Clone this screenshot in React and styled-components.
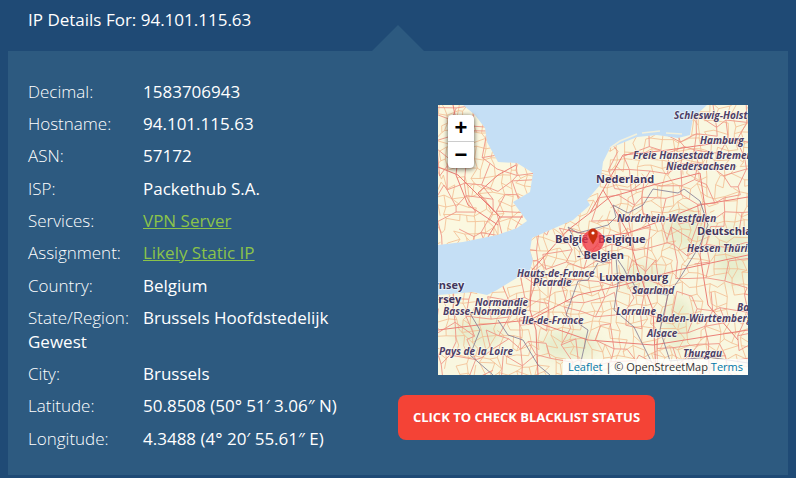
import React from 'react';
import styled, { createGlobalStyle } from 'styled-components';

const GlobalStyle = createGlobalStyle`
  html, body {
    margin: 0;
    padding: 0;
    background: #1f4a75;
    font-family: "Open Sans", "Liberation Sans", sans-serif;
    overflow: hidden;
  }
`;

const Page = styled.div`
  width: 796px;
  height: 478px;
  box-sizing: border-box;
  padding: 0 8px 3px;
  display: flex;
  flex-direction: column;
`;

const Title = styled.h2`
  margin: 0;
  height: 51px;
  box-sizing: border-box;
  padding: 8px 0 0 20px;
  font-size: 17px;
  line-height: 24px;
  font-weight: 400;
  color: #fff;
`;

const Panel = styled.section`
  position: relative;
  flex: 1;
  display: flex;
  background: #2d5a80;
  padding: 28.9px 20px 0;

  &::before {
    content: '';
    position: absolute;
    top: -26px;
    left: 364px;
    border-left: 26px solid transparent;
    border-right: 26px solid transparent;
    border-bottom: 26px solid #2d5a80;
  }
`;

const Details = styled.div`
  width: 320px;
  margin-right: 50px;
  flex: none;
`;

const Row = styled.div`
  font-size: 17px;
  line-height: 24px;
  margin-bottom: 8.29px;
  color: #fff;
`;

const Label = styled.span`
  display: inline-block;
  width: 115px;
  font-weight: 300;
`;

const GreenLink = styled.a`
  color: #8bc34a;
  text-decoration: underline;
`;

const Side = styled.div`
  display: flex;
  flex-direction: column;
  align-items: flex-start;
  padding-top: 25.1px;
`;

const MapFrame = styled.div`
  position: relative;
  width: 310px;
  height: 270px;
  margin-left: 40px;
  overflow: hidden;
  background: #c5dff5;
`;

const MapArt = styled.svg`
  display: block;
`;

const ZoomBox = styled.div`
  position: absolute;
  top: 10px;
  left: 10px;
  width: 26px;
  background: #fff;
  border-radius: 4px;
  box-shadow: 0 1px 5px rgba(0, 0, 0, 0.65);
`;

const ZoomButton = styled.div`
  height: 26px;
  display: flex;
  align-items: center;
  justify-content: center;
  font-family: "Liberation Sans", Arial, sans-serif;
  font-size: 22px;
  font-weight: 700;
  color: #000;
  border-bottom: ${(p) => (p.$last ? 'none' : '1px solid #ccc')};
`;

const Attribution = styled.div`
  position: absolute;
  right: 0;
  bottom: 0;
  height: 16px;
  padding: 0 5px;
  font-size: 11px;
  line-height: 16px;
  color: #333;
  white-space: nowrap;
  background: rgba(255, 255, 255, 0.8);
`;

const AttrLink = styled.a`
  color: #0078a8;
`;

const BlacklistButton = styled.button`
  width: 257px;
  height: 45px;
  margin-top: 20px;
  border: none;
  border-radius: 8px;
  padding: 0;
  background: #f44336;
  color: #fff;
  font-family: "Open Sans", "Liberation Sans", sans-serif;
  font-size: 13px;
  font-weight: 700;
  text-transform: uppercase;
`;

const RegionLabel = styled.text`
  font-family: "Open Sans", "Liberation Sans", sans-serif;
  font-size: 10px;
  font-weight: 700;
  font-style: italic;
  fill: #4d3f66;
  stroke: rgba(255, 255, 255, 0.6);
  stroke-width: 1.5px;
  paint-order: stroke;
`;

const CountryLabel = styled.text`
  font-family: "Open Sans", "Liberation Sans", sans-serif;
  font-size: 11px;
  font-weight: 700;
  fill: #43365c;
  stroke: rgba(255, 255, 255, 0.65);
  stroke-width: 1.5px;
  paint-order: stroke;
`;

const rows = [
  ['Decimal:', '1583706943'],
  ['Hostname:', '94.101.115.63'],
  ['ASN:', '57172'],
  ['ISP:', 'Packethub S.A.'],
  ['Services:', 'VPN Server', true],
  ['Assignment:', 'Likely Static IP', true],
  ['Country:', 'Belgium'],
  ['State/Region:', 'Brussels Hoofdstedelijk Gewest'],
  ['City:', 'Brussels'],
  ['Latitude:', '50.8508 (50° 51′ 3.06″ N)'],
  ['Longitude:', '4.3488 (4° 20′ 55.61″ E)'],
];

const regions = [
  ['Schleswig-Holstein', 236, 14],
  ['Hamburg', 262, 39],
  ['Freie Hansestadt Bremen', 195, 54],
  ['Niedersachsen', 228, 65],
  ['Nordrhein-Westfalen', 179, 117],
  ['Hessen', 249, 147],
  ['Thüringen', 285, 147],
  ['Hauts-de-France', 79, 172],
  ['Picardie', 95, 181],
  ['Saarland', 194, 189],
  ['Normandie', 37, 201],
  ['Basse-Normandie', 5, 210],
  ['Lorraine', 178, 210],
  ['Bayern', 299, 206],
  ['Baden-Württemberg', 218, 217],
  ['Ile-de-France', 84, 219],
  ['Alsace', 209, 232],
  ['Pays de la Loire', 1, 250],
  ['Thurgau', 245, 252],
];

const countries = [
  ['Nederland', 158, 78],
  ['Deutschland', 259, 130],
  ['België', 117, 138],
  ['Belgique', 160, 138],
  ['- Belgien', 139, 154],
  ['Luxembourg', 161, 176],
  ['Guernsey', -26, 184],
  ['Jersey', -10, 198],
];

const englandLand =
  'M25 0L37 10 47 23 49 37 60 57 79 58 95 68 92 87 75 97 89 116 79 123 59 130 25 137 0 140V0Z';
const continentLand =
  'M94 133L119 122 135 115 152 100 149 95 162 80 165 57 172 43 199 32 219 30 240 33 252 30 255 13 269 0H310V270H0V190L25 188 35 187 49 190 59 185 72 177 92 165 95 155 92 145Z';
const wadden = 'M172 43L182 36 199 29M204 28L222 26M228 28L244 29';

const motorways = [
  'M0 62L20 70 45 95 62 112 85 112',
  'M15 0L22 35 18 70 30 100 60 120',
  'M62 112L50 132M62 112L40 88 60 70 78 60',
  'M100 270L98 225 92 205 94 165 130 125 152 108 165 85 185 50 230 45 300 35',
  'M0 225L40 220 92 215 140 190 185 180 240 165 310 150',
  'M130 125L160 132 190 128 225 115 262 100 310 92',
  'M165 85L180 110 190 128 200 165 215 205 218 270',
  'M152 108L172 92 215 80 262 68',
  'M262 68L268 110 262 150 270 200 300 235',
  'M92 215L150 235 215 240 310 225',
];

const borders = [
  'M130 122L140 128 155 124 170 120 178 112 175 100 190 108 205 100 215 84 240 88 246 84 262 96 270 120 262 140',
  'M130 122L145 150 165 158 178 152 180 178 190 170 200 186 230 190 240 176 262 140',
  'M178 152L186 164 192 176',
  'M230 190L222 225 232 256 270 252 310 258',
  'M160 158L150 175 140 176 128 210 150 225 140 270',
  'M60 215L70 230 85 235 100 260 112 270',
  'M30 205L42 225 32 250 55 270',
  'M180 178L176 205 196 222 214 258',
];

// road net: a jittered grid clipped to the land, same look as the osm tiles
function buildRoads(step, seed, keep) {
  let s = seed;
  const rnd = () => {
    s = (s * 16807) % 2147483647;
    return s / 2147483647;
  };
  const nodes = [];
  for (let y = 0; y <= 270 + step; y += step) {
    const line = [];
    for (let x = 0; x <= 310 + step; x += step) {
      line.push([x + (rnd() - 0.5) * step * 0.9, y + (rnd() - 0.5) * step * 0.9]);
    }
    nodes.push(line);
  }
  let d = '';
  nodes.forEach((line, j) => {
    line.forEach((n, i) => {
      const right = line[i + 1];
      const down = nodes[j + 1] && nodes[j + 1][i];
      if (right && rnd() < keep) d += `M${n[0].toFixed(1)} ${n[1].toFixed(1)}L${right[0].toFixed(1)} ${right[1].toFixed(1)}`;
      if (down && rnd() < keep) d += `M${n[0].toFixed(1)} ${n[1].toFixed(1)}L${down[0].toFixed(1)} ${down[1].toFixed(1)}`;
    });
  });
  return d;
}

const mainRoads = buildRoads(16, 4711, 0.72);
const minorRoads = buildRoads(9, 90210, 0.75);

const MapDrawing = () => (
  <MapArt width="310" height="270" viewBox="0 0 310 270">
    <defs>
      <clipPath id="land">
        <path d={englandLand} />
        <path d={continentLand} />
      </clipPath>
      <filter id="soft">
        <feGaussianBlur stdDeviation="6" />
      </filter>
    </defs>
    <rect width="310" height="270" fill="#c5dff5" />
    <path d={englandLand} fill="#fbf8e0" />
    <path d={continentLand} fill="#f9f7e0" />
    <path d={wadden} fill="none" stroke="#f3f1dc" strokeWidth="1.6" />
    <g clipPath="url(#land)">
      <g fill="#d3e2b8" opacity="0.45" filter="url(#soft)">
        <ellipse cx="250" cy="125" rx="24" ry="20" />
        <ellipse cx="295" cy="150" rx="18" ry="30" />
        <ellipse cx="205" cy="172" rx="24" ry="13" />
        <ellipse cx="240" cy="218" rx="14" ry="26" />
        <ellipse cx="130" cy="240" rx="30" ry="14" />
        <ellipse cx="40" cy="228" rx="26" ry="14" />
      </g>
      <path d={minorRoads} fill="none" stroke="#f2bd90" strokeWidth="0.8" />
      <path d={mainRoads} fill="none" stroke="#ee9587" strokeWidth="0.9" />
      {motorways.map((d) => (
        <path key={d} d={d} fill="none" stroke="#ea7f76" strokeWidth="1" />
      ))}
      {borders.map((d) => (
        <path key={d} d={d} fill="none" stroke="#7d7690" strokeWidth="0.8" />
      ))}
    </g>
    {regions.map(([name, x, y]) => (
      <RegionLabel key={name} x={x} y={y}>{name}</RegionLabel>
    ))}
    {countries.map(([name, x, y]) => (
      <CountryLabel key={name} x={x} y={y}>{name}</CountryLabel>
    ))}
    <circle cx="155" cy="136" r="11" fill="#f0303f" opacity="0.75" />
    <path
      d="M155 139.5C152.5 135 150.3 132.5 150.3 128.3A4.7 4.7 0 0 1 159.7 128.3C159.7 132.5 157.5 135 155 139.5Z"
      fill="#c8300f"
    />
    <circle cx="155" cy="128" r="1.6" fill="#fff" />
  </MapArt>
);

export default function App() {
  return (
    <>
      <GlobalStyle />
      <Page>
        <Title>IP Details For: 94.101.115.63</Title>
        <Panel>
          <Details>
            {rows.map(([label, value, link]) => (
              <Row key={label}>
                <Label>{label}</Label>
                {link ? <GreenLink href="#">{value}</GreenLink> : value}
              </Row>
            ))}
          </Details>
          <Side>
            <MapFrame>
              <MapDrawing />
              <ZoomBox>
                <ZoomButton>+</ZoomButton>
                <ZoomButton $last>−</ZoomButton>
              </ZoomBox>
              <Attribution>
                <AttrLink>Leaflet</AttrLink> | © OpenStreetMap <AttrLink>Terms</AttrLink>
              </Attribution>
            </MapFrame>
            <BlacklistButton>Click to check blacklist status</BlacklistButton>
          </Side>
        </Panel>
      </Page>
    </>
  );
}
